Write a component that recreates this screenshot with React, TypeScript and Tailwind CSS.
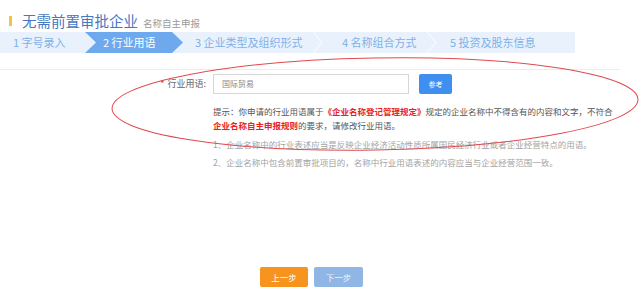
import React from "react";

const steps = [
  { label: "1 字号录入", width: "w-[85px]", pad: "pl-[13px]" },
  { label: "2 行业用语", width: "w-[98px]", pad: "pl-[18px]", active: true },
  { label: "3 企业类型及组织形式", width: "w-[140px]", pad: "pl-[12px]", sep: true },
  { label: "4 名称组合方式", width: "w-[114px]", pad: "pl-[19px]", sep: true },
  { label: "5 投资及股东信息", width: "flex-1", pad: "pl-[13px]" },
];

function StepBar() {
  return (
    <div className="mt-[2px] flex h-[21px] w-[575px] bg-[#e9f2fc]">
      {steps.map((s) => (
        <div
          key={s.label}
          className={
            "relative flex items-center text-[11px] leading-[21px] " +
            s.width +
            " " +
            s.pad +
            (s.active
              ? " bg-[#6ea9ee] text-white [clip-path:polygon(0_0,calc(100%_-_11px)_0,100%_50%,calc(100%_-_11px)_100%,0_100%,11px_50%)]"
              : " text-[#7eb0e8]")
          }
        >
          {s.label}
          {s.sep && (
            <svg className="absolute right-0 top-0 h-[21px] w-[10px]" viewBox="0 0 10 21">
              <polyline points="0,0 9,10.5 0,21" fill="none" stroke="#f6f9fe" strokeWidth="1.2" />
            </svg>
          )}
        </div>
      ))}
    </div>
  );
}

export default function App() {
  return (
    <div className="relative h-[295px] w-[640px] overflow-hidden bg-white font-['Noto_Sans_CJK_SC','Liberation_Sans',sans-serif]">
      {/* Title */}
      <div className="flex items-center pl-[9px] pt-[12px]">
        <span className="h-[10px] w-[3px] bg-[#f5c242]" />
        <span className="ml-[10px] text-[14.5px] leading-[18px] text-[#4677bf]">无需前置审批企业</span>
        <span className="ml-[5px] mt-[3px] text-[9.5px] leading-[12px] text-[#9a9a9a]">名称自主申报</span>
      </div>

      <StepBar />

      <div className="mt-[16px] h-px w-[620px] bg-[#ececec]" />

      {/* Form row */}
      <div className="mt-[4px] flex items-center">
        <div className="w-[206px] text-right text-[9px] leading-[20px] text-[#666]">
          <span className="mr-[3px] text-[#e4393c]">*</span>行业用语:
        </div>
        <div className="ml-[7px] flex h-[20px] w-[196px] items-center border border-[#d6d6d6] pl-[8px] text-[8px] text-[#888]">
          国际贸易
        </div>
        <button className="ml-[10px] h-[20px] w-[33px] rounded-[2px] bg-[#3f8ff0] text-[7px] text-white">
          参考
        </button>
      </div>

      {/* Tip */}
      <div className="ml-[213px] mt-[10px] text-[8.5px] leading-[14px] text-[#555]">
        <div>
          提示：你申请的行业用语属于<span className="font-bold text-[#e8221c]">《企业名称登记管理规定》</span>
          规定的企业名称中不得含有的内容和文字，不符合
        </div>
        <div>
          <span className="font-bold text-[#e8221c]">企业名称自主申报规则</span>的要求，请修改行业用语。
        </div>
      </div>

      {/* Notes */}
      <div className="ml-[213px] mt-[3px] text-[8.5px] leading-[18px] text-[#a3a3a3]">
        <div>1、企业名称中的行业表述应当是反映企业经济活动性质所属国民经济行业或者企业经营特点的用语。</div>
        <div>2、企业名称中包含前置审批项目的，名称中行业用语表述的内容应当与企业经营范围一致。</div>
      </div>

      {/* Buttons */}
      <div className="mt-[96px] flex gap-[6px] pl-[260px]">
        <button className="h-[20px] w-[48px] rounded-[2px] bg-[#f7941e] text-[8.5px] text-white">上一步</button>
        <button className="h-[20px] w-[49px] rounded-[2px] bg-[#8fb6e4] text-[8.5px] text-[#eef4fb]">下一步</button>
      </div>

      {/* Hand-drawn annotation */}
      <svg className="pointer-events-none absolute left-0 top-0" width="640" height="295">
        <ellipse cx="375" cy="104" rx="263" ry="46" transform="rotate(-1 375 104)" fill="none" stroke="#de4a4f" strokeWidth="1" />
      </svg>
    </div>
  );
}
